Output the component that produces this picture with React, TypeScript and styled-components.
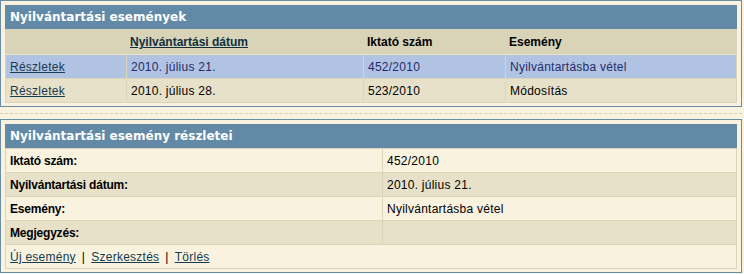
import React from 'react'
import styled, { createGlobalStyle } from 'styled-components'

const GlobalStyle = createGlobalStyle`
  html, body {
    margin: 0;
    padding: 0;
    background: #f8f2df;
  }
  body {
    font-family: "Liberation Sans", Arial, sans-serif;
    font-size: 12px;
    color: #000;
  }
`

const Page = styled.div`
  width: 742px;
  display: flex;
  flex-direction: column;
`

const Panel = styled.section`
  border: 1px solid #6a8ca6;
  padding: 4px 4px 3px 4px;
  background: #f8f2df;
`

const Title = styled.h2`
  margin: 0;
  height: 24px;
  line-height: 25px;
  padding: 0 5px;
  background: #628aa6;
  color: #fff;
  font-family: "DejaVu Sans", Verdana, sans-serif;
  font-size: 12px;
  font-weight: bold;
  letter-spacing: 0;
`

const Separator = styled.hr`
  margin: 6px 0 5px;
  border: 0;
  border-top: 1px dashed #d8cfaa;
  height: 0;
`

const Table = styled.table`
  width: 100%;
  border-collapse: collapse;
  table-layout: fixed;
`

const HeadCell = styled.th<{ $w?: number }>`
  ${(p) => (p.$w ? `width: ${p.$w}px;` : '')}
  height: 24px;
  padding: 0 3px;
  background: #d9d4b7;
  border: 1px solid #d9d4b7;
  border-bottom-color: #e8e2c8;
  text-align: left;
  font-weight: bold;
  font-size: 12px;
`

const Row = styled.tr<{ $tone: 'light' | 'dark' | 'selected' }>`
  background: ${(p) =>
    p.$tone === 'selected' ? '#b1c3e3' : p.$tone === 'dark' ? '#e7e1c9' : '#f8f2df'};
  color: ${(p) => (p.$tone === 'selected' ? '#1f2c6a' : '#000')};
`

const Cell = styled.td<{ $w?: number }>`
  ${(p) => (p.$w ? `width: ${p.$w}px;` : '')}
  height: 23px;
  padding: 0 4px;
  border: 1px solid #dcd5b7;
  white-space: nowrap;
  letter-spacing: 0.25px;
`

const LabelCell = styled(Cell)`
  font-weight: bold;
  letter-spacing: -0.2px;
`

const Link = styled.a`
  color: #163a4f;
  text-decoration: underline;
  cursor: pointer;
`

const SortLink = styled(Link)`
  color: #0f2f3f;
`

const Actions = styled.div`
  display: flex;
  gap: 6px;
  align-items: center;
`

const Pipe = styled.span`
  color: #000;
`

const events = [
  { date: '2010. július 21.', no: '452/2010', kind: 'Nyilvántartásba vétel', selected: true },
  { date: '2010. július 28.', no: '523/2010', kind: 'Módosítás', selected: false },
]

const details = [
  ['Iktató szám:', '452/2010'],
  ['Nyilvántartási dátum:', '2010. július 21.'],
  ['Esemény:', 'Nyilvántartásba vétel'],
  ['Megjegyzés:', ''],
]

export default function App() {
  return (
    <>
      <GlobalStyle />
      <Page>
        <Panel>
          <Title>Nyilvántartási események</Title>
          <Table>
            <thead>
              <tr>
                <HeadCell $w={114}></HeadCell>
                <HeadCell $w={230}>
                  <SortLink>Nyilvántartási dátum</SortLink>
                </HeadCell>
                <HeadCell $w={135}>Iktató szám</HeadCell>
                <HeadCell>Esemény</HeadCell>
              </tr>
            </thead>
            <tbody>
              {events.map((e) => (
                <Row key={e.no} $tone={e.selected ? 'selected' : 'dark'}>
                  <Cell>
                    <Link>Részletek</Link>
                  </Cell>
                  <Cell>{e.date}</Cell>
                  <Cell>{e.no}</Cell>
                  <Cell>{e.kind}</Cell>
                </Row>
              ))}
            </tbody>
          </Table>
        </Panel>
        <Separator />
        <Panel>
          <Title>Nyilvántartási esemény részletei</Title>
          <Table>
            <tbody>
              {details.map(([label, value], i) => (
                <Row key={label} $tone={i % 2 ? 'dark' : 'light'}>
                  <LabelCell $w={368}>{label}</LabelCell>
                  <Cell>{value}</Cell>
                </Row>
              ))}
              <Row $tone="light">
                <Cell colSpan={2}>
                  <Actions>
                    <Link>Új esemény</Link>
                    <Pipe>|</Pipe>
                    <Link>Szerkesztés</Link>
                    <Pipe>|</Pipe>
                    <Link>Törlés</Link>
                  </Actions>
                </Cell>
              </Row>
            </tbody>
          </Table>
        </Panel>
      </Page>
    </>
  )
}
